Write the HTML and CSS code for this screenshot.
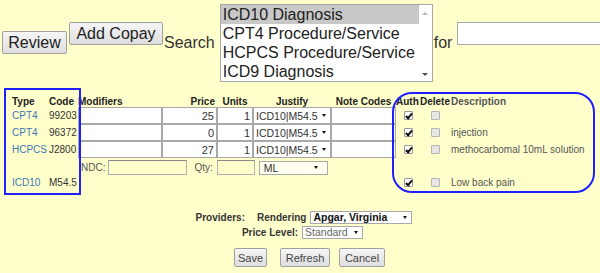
FILE: index.html
```html
<!DOCTYPE html>
<html lang="en">
<head>
    <meta charset="UTF-8">
    <meta name="viewport" content="width=device-width, initial-scale=1.0">
    <title>Fee Sheet</title>
    <link rel="stylesheet" href="styles.css">
</head>
<body>

    <!-- Barra de busca -->
    <div class="toolbar">
        <button class="btn btn-big btn-review">Review</button>
        <button class="btn btn-big btn-copay">Add Copay</button>
        <span class="label-big label-search">Search</span>
        <div class="listbox">
            <div class="listbox-options">
                <div class="option selected">ICD10 Diagnosis</div>
                <div class="option">CPT4 Procedure/Service</div>
                <div class="option">HCPCS Procedure/Service</div>
                <div class="option">ICD9 Diagnosis</div>
            </div>
            <div class="listbox-scroll">
                <i class="arrow-up"></i>
                <i class="arrow-down"></i>
            </div>
        </div>
        <span class="label-big label-for">for</span>
        <input type="text" class="search-input">
    </div>

    <!-- Linhas do fee sheet -->
    <div class="fee-sheet">
        <div class="fs-row fs-head">
            <span class="c-type">Type</span>
            <span class="c-code">Code</span>
            <span class="c-mod">Modifiers</span>
            <span class="c-price">Price</span>
            <span class="c-units">Units</span>
            <span class="c-just">Justify</span>
            <span class="c-note">Note Codes</span>
            <span class="c-auth">Auth</span>
            <span class="c-del">Delete</span>
            <span class="c-desc">Description</span>
        </div>

        <div class="fs-row fs-item">
            <a class="c-type">CPT4</a>
            <span class="c-code">99203</span>
            <input type="text" class="c-mod">
            <input type="text" class="c-price" value="25">
            <input type="text" class="c-units" value="1">
            <span class="c-just select"><span>ICD10|M54.5</span><i class="caret"></i></span>
            <input type="text" class="c-note">
            <span class="c-auth"><input type="checkbox" class="cb" checked></span>
            <span class="c-del"><input type="checkbox" class="cb cb-del"></span>
            <span class="c-desc"></span>
        </div>

        <div class="fs-row fs-item">
            <a class="c-type">CPT4</a>
            <span class="c-code">96372</span>
            <input type="text" class="c-mod">
            <input type="text" class="c-price" value="0">
            <input type="text" class="c-units" value="1">
            <span class="c-just select"><span>ICD10|M54.5</span><i class="caret"></i></span>
            <input type="text" class="c-note">
            <span class="c-auth"><input type="checkbox" class="cb" checked></span>
            <span class="c-del"><input type="checkbox" class="cb cb-del"></span>
            <span class="c-desc">injection</span>
        </div>

        <div class="fs-row fs-item">
            <a class="c-type">HCPCS</a>
            <span class="c-code">J2800</span>
            <input type="text" class="c-mod">
            <input type="text" class="c-price" value="27">
            <input type="text" class="c-units" value="1">
            <span class="c-just select"><span>ICD10|M54.5</span><i class="caret"></i></span>
            <input type="text" class="c-note">
            <span class="c-auth"><input type="checkbox" class="cb" checked></span>
            <span class="c-del"><input type="checkbox" class="cb cb-del"></span>
            <span class="c-desc">methocarbomal 10mL solution</span>
        </div>

        <div class="fs-row fs-ndc">
            <span class="ndc-label">NDC:</span>
            <input type="text" class="ndc-input">
            <span class="qty-label">Qty:</span>
            <input type="text" class="qty-input">
            <span class="select select-unit"><span>ML</span><i class="caret"></i></span>
        </div>

        <div class="fs-row fs-diag">
            <a class="c-type">ICD10</a>
            <span class="c-code">M54.5</span>
            <span class="diag-gap"></span>
            <span class="c-auth"><input type="checkbox" class="cb" checked></span>
            <span class="c-del"><input type="checkbox" class="cb cb-del"></span>
            <span class="c-desc">Low back pain</span>
        </div>
    </div>

    <!-- Prestadores -->
    <div class="providers">
        <div class="prov-row prov-render">
            <span class="prov-label">Providers:</span>
            <span class="prov-label prov-sub">Rendering</span>
            <span class="select select-prov"><span>Apgar, Virginia</span><i class="caret"></i></span>
        </div>
        <div class="prov-row prov-price">
            <span class="prov-label">Price Level:</span>
            <span class="select select-level"><span>Standard</span><i class="caret"></i></span>
        </div>
    </div>

    <div class="actions">
        <button class="btn btn-small btn-save">Save</button>
        <button class="btn btn-small btn-refresh">Refresh</button>
        <button class="btn btn-small btn-cancel">Cancel</button>
    </div>

    <!-- Marcações azuis -->
    <div class="mark mark-left"></div>
    <div class="mark mark-right"></div>

</body>
</html>
```

FILE: styles.css
```css
html, body {
    margin: 0;
    padding: 0;
    overflow: hidden;
}

body {
    font-family: "Liberation Sans", Arial, sans-serif;
    font-size: 10px;
    color: #333;
    background-color: #ffffcc; /* amarelo claro */
    height: 273px;
}

/* ---------- barra de busca ---------- */

.toolbar {
    display: flex;
    align-items: flex-start;
    padding-left: 2px;
    height: 81px;
}

.toolbar > * {
    flex: none; /* nada encolhe, o campo de busca passa da borda */
}

.btn {
    font-family: "Liberation Sans", Arial, sans-serif;
    color: #222;
    background: linear-gradient(#f6f6f6, #dedede);
    border: 1px solid #a0a0a0;
    border-radius: 2px;
    padding: 0;
    margin: 0;
    box-sizing: border-box;
}

.btn-big {
    font-size: 16px;
    height: 23px;
}

.btn-review {
    width: 65px;
    margin-top: 31px;
}

.btn-copay {
    width: 94px;
    margin-top: 22px;
    margin-left: 2px;
}

.label-big {
    font-size: 16px;
    line-height: 18px;
    margin-top: 34px;
    color: #333;
}

.label-search {
    margin-left: 1px;
}

.listbox {
    display: flex;
    width: 213px;
    height: 78px;
    margin-top: 4px;
    margin-left: 5px;
    background: #fff;
    border: 1px solid #a8a8a8;
    box-sizing: border-box;
}

.listbox-options {
    flex: 1;
}

.option {
    font-size: 16px;
    height: 19px;
    line-height: 19px;
    padding-left: 2px;
    color: #222;
    white-space: nowrap;
}

.option.selected {
    background-color: #c8c8c8;
}

.listbox-scroll {
    width: 13px;
    display: flex;
    flex-direction: column;
    justify-content: space-between;
    align-items: center;
    padding: 7px 0 5px;
}

.arrow-up {
    width: 0;
    height: 0;
    border-left: 3px solid transparent;
    border-right: 3px solid transparent;
    border-bottom: 3px solid #b8b8b8;
}

.arrow-down {
    width: 0;
    height: 0;
    border-left: 3px solid transparent;
    border-right: 3px solid transparent;
    border-top: 3px solid #505050;
}

.label-for {
    margin-left: 1px;
}

.search-input {
    width: 160px;
    height: 23px;
    margin: 22px 0 0 5px;
    padding: 0 3px;
    box-sizing: border-box;
    border: 1px solid #a8a8a8;
    background: #fff;
}

/* ---------- fee sheet ---------- */

.fee-sheet {
    margin-top: 14px;
    padding-left: 12px;
}

.fs-row {
    display: flex;
    align-items: center;
}

.fs-row > * {
    flex: none;
    box-sizing: border-box;
}

.fs-head {
    height: 12px;
    font-weight: bold;
    color: #222;
    white-space: nowrap;
}

.c-type  { width: 37px; color: #3c78b4; text-decoration: none; white-space: nowrap; }
.c-code  { width: 29px; white-space: nowrap; }
.c-mod   { width: 84px; }
.c-price { width: 55px; text-align: right; }
.c-units { width: 36px; text-align: center; }
.c-just  { width: 78px; text-align: center; }
.c-note  { width: 65px; text-align: center; }
.c-auth  { width: 24px; display: flex; justify-content: center; }
.c-del   { width: 30px; display: flex; justify-content: center; }
.c-desc  { padding-left: 1px; color: #555; white-space: nowrap; }

.fs-head .c-type { color: #222; }
.fs-head .c-price { padding-right: 2px; }
.fs-head .c-auth,
.fs-head .c-del { display: block; }

.fs-item {
    height: 17px;
}

.fs-item input[type="text"] {
    height: 17px;
    margin: 0;
    padding: 0 2px;
    border: 1px solid #a8a8a8;
    background: #fff;
    font-family: "Liberation Sans", Arial, sans-serif;
    font-size: 11px;
    color: #333;
}

.fs-item .c-units {
    text-align: right;
}

.select {
    display: flex;
    align-items: center;
    justify-content: space-between;
    background: #fff;
    border: 1px solid #a8a8a8;
    box-sizing: border-box;
    padding: 0 4px 0 2px;
    font-size: 10.5px;
    color: #333;
    white-space: nowrap;
}

.fs-item .c-just {
    height: 17px;
}

.caret {
    width: 0;
    height: 0;
    border-left: 2.5px solid transparent;
    border-right: 2.5px solid transparent;
    border-top: 3px solid #111;
}

.cb {
    appearance: none;
    -webkit-appearance: none;
    width: 9px;
    height: 9px;
    margin: 0;
    border: 1px solid #9a9a9a;
    border-radius: 1px;
    background: #fff;
    position: relative;
}

.cb:checked::after {
    content: "";
    position: absolute;
    left: 2px;
    top: 0;
    width: 2px;
    height: 5px;
    border: solid #111;
    border-width: 0 2px 2px 0;
    transform: rotate(40deg);
}

.cb-del {
    background: #e6e6e6;
    border-color: #b4b4b4;
}

.fs-ndc {
    height: 18px;
    padding-left: 69px;
}

.ndc-label,
.qty-label {
    color: #555;
}

.ndc-input,
.qty-input {
    height: 15px;
    margin: 1px 0 0;
    padding: 0;
    border: 1px solid #b0b0b0;
    border-top-color: #8a8a8a;
    background: #ffffcc;
}

.ndc-input {
    width: 79px;
    margin-left: 3px;
}

.qty-label {
    margin-left: 7px;
}

.qty-input {
    width: 38px;
    margin-left: 4px;
}

.select-unit {
    width: 69px;
    height: 14px;
    margin: 1px 0 0 4px;
    background: #fffff0;
    padding-left: 4px;
    padding-right: 9px;
}

.fs-diag {
    height: 12px;
}

.diag-gap {
    width: 318px;
}

/* ---------- prestadores ---------- */

.providers {
    margin-top: 22px;
}

.prov-row {
    display: flex;
    align-items: center;
    justify-content: center;
    height: 14px;
}

.prov-render {
    padding-left: 8px;
}

.prov-price {
    margin-top: 1px;
    padding-left: 5px;
}

.prov-label {
    font-weight: bold;
    color: #333;
    white-space: nowrap;
}

.prov-sub {
    margin-left: 12px;
}

.select-prov {
    width: 102px;
    height: 13px;
    margin-left: 4px;
    font-weight: bold;
    color: #111;
}

.select-level {
    width: 61px;
    height: 13px;
    margin-left: 4px;
    color: #666;
}

/* ---------- botões ---------- */

.actions {
    display: flex;
    justify-content: center;
    margin-top: 9px;
    padding-left: 19px;
}

.btn-small {
    font-size: 11px;
    height: 19px;
    color: #444;
}

.btn-save    { width: 33px; }
.btn-refresh { width: 50px; margin-left: 13px; }
.btn-cancel  { width: 46px; margin-left: 9px; }

/* ---------- marcações ---------- */

.mark {
    position: absolute;
    border: 2px solid #1f1fff;
    box-sizing: border-box;
}

.mark-left {
    left: 4px;
    top: 88px;
    width: 77px;
    height: 107px;
}

.mark-right {
    left: 392px;
    top: 92px;
    width: 203px;
    height: 101px;
    border-radius: 20px;
}
```
